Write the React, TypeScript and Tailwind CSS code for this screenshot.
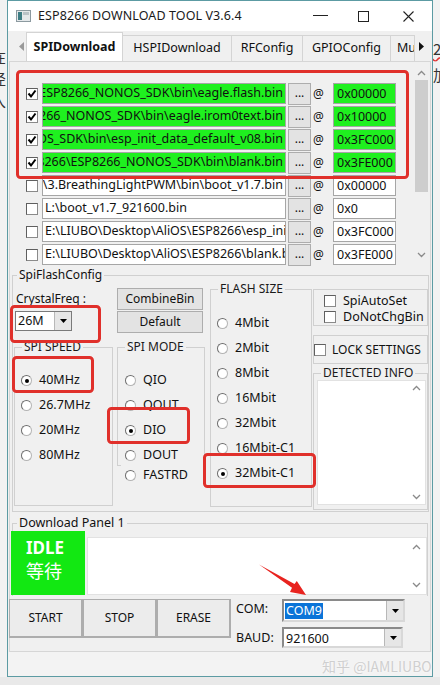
import type { ReactNode } from "react"

const rows = [
  { on: true, path: "ESP8266_NONOS_SDK\\bin\\eagle.flash.bin", addr: "0x00000", end: true },
  { on: true, path: "8266_NONOS_SDK\\bin\\eagle.irom0text.bin", addr: "0x10000", end: true },
  { on: true, path: "NOS_SDK\\bin\\esp_init_data_default_v08.bin", addr: "0x3FC000", end: true },
  { on: true, path: "P8266\\ESP8266_NONOS_SDK\\bin\\blank.bin", addr: "0x3FE000", end: true },
  { on: false, path: "M\\3.BreathingLightPWM\\bin\\boot_v1.7.bin", addr: "0x00000", end: true },
  { on: false, path: "L:\\boot_v1.7_921600.bin", addr: "0x0", end: false },
  { on: false, path: "E:\\LIUBO\\Desktop\\AliOS\\ESP8266\\esp_ini", addr: "0x3FC000", end: false },
  { on: false, path: "E:\\LIUBO\\Desktop\\AliOS\\ESP8266\\blank.b", addr: "0x3FE000", end: false },
]

function Check({ on = false }: { on?: boolean }) {
  return (
    <span className="w-[12px] h-[12px] shrink-0 border border-[#8a8a8a] border-t-[#5f5f5f] border-l-[#5f5f5f] bg-white flex items-center justify-center">
      {on && (
        <svg width="10" height="10" viewBox="0 0 10 10">
          <path d="M1.5 4.5 L4 7.5 L8.5 1.5" fill="none" stroke="#000" strokeWidth="2" />
        </svg>
      )}
    </span>
  )
}

function Radio({ label, on = false }: { label: string; on?: boolean }) {
  return (
    <div className="h-[25px] flex items-center gap-[7px] text-[12.5px]">
      <span className="w-[11px] h-[11px] shrink-0 rounded-full border border-[#b4b4b4] border-t-[#6d6d6d] border-l-[#6d6d6d] bg-white flex items-center justify-center">
        {on && <span className="w-[4px] h-[4px] rounded-full bg-black" />}
      </span>
      <span>{label}</span>
    </div>
  )
}

function Group({ label, className, children }: { label: string; className?: string; children?: ReactNode }) {
  return (
    <fieldset className={`border border-[#d0d0d0] ${className ?? ""}`}>
      <legend className="ml-[7px] px-[2px] text-[12px] leading-[14px] text-[#1a1a1a]">{label}</legend>
      {children}
    </fieldset>
  )
}

function Btn({ children, className }: { children: ReactNode; className?: string }) {
  return (
    <div className={`bg-[#e3e3e3] border border-[#adadad] flex items-center justify-center text-[12px] ${className ?? ""}`}>
      {children}
    </div>
  )
}

function DropArrow() {
  return (
    <span className="w-[17px] shrink-0 bg-[#e6e6e6] border-l border-[#b8b8b8] flex items-center justify-center">
      <svg width="7" height="4" viewBox="0 0 7 4">
        <path d="M0 0 H7 L3.5 4 Z" fill="#000" />
      </svg>
    </span>
  )
}

function Chevron({ up }: { up?: boolean }) {
  return (
    <svg width="9" height="6" viewBox="0 0 9 6">
      <path d={up ? "M1 5 L4.5 1.5 L8 5" : "M1 1 L4.5 4.5 L8 1"} fill="none" stroke="#8a8a8a" strokeWidth="1.3" />
    </svg>
  )
}

function TitleBar() {
  return (
    <div className="h-[30px] bg-white flex items-center shrink-0">
      <svg className="ml-[8px]" width="15" height="12" viewBox="0 0 15 12">
        <rect x="0.5" y="0.5" width="14" height="11" fill="#e4e8ea" stroke="#8c9aa0" />
        <rect x="2" y="2" width="4" height="8" fill="#3d7d84" />
        <rect x="7" y="2" width="6" height="3" fill="#b9c3c7" />
      </svg>
      <span className="ml-[7px] text-[12.5px] tracking-[0.1px] text-[#1a1a1a]">ESP8266 DOWNLOAD TOOL V3.6.4</span>
      <div className="ml-auto flex items-center">
        <svg width="16" height="2" viewBox="0 0 16 2" className="mr-[29px]">
          <rect width="15" height="1" fill="#222" />
        </svg>
        <svg width="11" height="11" viewBox="0 0 11 11" className="mr-[34px]">
          <rect x="0.5" y="0.5" width="10" height="10" fill="none" stroke="#222" />
        </svg>
        <svg width="11" height="11" viewBox="0 0 11 11" className="mr-[18px]">
          <path d="M0.5 0.5 L10.5 10.5 M10.5 0.5 L0.5 10.5" stroke="#222" strokeWidth="1.1" />
        </svg>
      </div>
    </div>
  )
}

function TabStrip() {
  const tabs = [
    { t: "HSPIDownload", w: "w-[109px]" },
    { t: "RFConfig", w: "w-[71px]" },
    { t: "GPIOConfig", w: "w-[88px]" },
  ]
  return (
    <div className="h-[30px] flex items-end shrink-0 bg-[#f0f0f0]">
      <span className="w-[18px] h-full flex items-center justify-end pr-[2px]">
        <svg width="5" height="9" viewBox="0 0 5 9">
          <path d="M5 0 V9 L0 4.5 Z" fill="#9a9a9a" />
        </svg>
      </span>
      <div className="w-[97px] h-[29px] bg-white border border-b-0 border-[#d4d4d4] flex items-center justify-center text-[12.5px] font-bold">
        SPIDownload
      </div>
      {tabs.map((x) => (
        <div key={x.t} className={`${x.w} h-[26px] border border-l-0 border-b-0 border-[#d4d4d4] flex items-center justify-center text-[12.5px]`}>
          {x.t}
        </div>
      ))}
      <div className="w-[24px] h-[26px] border border-l-0 border-b-0 border-[#d4d4d4] overflow-hidden text-[12.5px] flex items-center pl-[6px]">
        Mu
      </div>
      <span className="h-full flex items-center pl-[4px]">
        <svg width="5" height="9" viewBox="0 0 5 9">
          <path d="M0 0 V9 L5 4.5 Z" fill="#111" />
        </svg>
      </span>
    </div>
  )
}

function FileList() {
  return (
    <div className="h-[204px] flex shrink-0">
      <div className="w-[403px] pt-[21px] pl-[16px]">
        {rows.map((r, i) => (
          <div key={i} className="h-[23px] flex items-start">
            <div className="h-[21px] flex items-center">
              <Check on={r.on} />
            </div>
            <div
              className={`ml-[4px] w-[244px] h-[21px] border border-[#a6a6a6] overflow-hidden flex items-center whitespace-nowrap text-[12.5px] px-[2px] ${r.on ? "bg-[#1ff01f]" : "bg-white"} ${r.end ? "justify-end" : "justify-start"}`}
            >
              {r.path}
            </div>
            <Btn className="ml-[2px] w-[23px] h-[22px] text-[11px] pb-[3px]">...</Btn>
            <span className="w-[12px] ml-[2px] text-[12px] leading-[21px]">@</span>
            <div className={`ml-[8px] w-[63px] h-[21px] border border-[#a6a6a6] text-[12.5px] leading-[19px] pl-[3px] ${r.on ? "bg-[#1ff01f]" : "bg-white"}`}>
              {r.addr}
            </div>
          </div>
        ))}
      </div>
      <div className="w-[17px] flex flex-col items-center pt-[8px] pb-[8px]">
        <Chevron up />
        <div className="w-[13px] h-[112px] bg-[#cdcdcd] mt-[4px]" />
        <div className="flex-1" />
        <Chevron />
      </div>
    </div>
  )
}

function SpiFlashConfig() {
  return (
    <fieldset className="mx-[2px] mt-[2px] h-[244px] border border-[#d0d0d0] shrink-0">
      <legend className="ml-[4px] px-[2px] text-[12px] leading-[14px]">SpiFlashConfig</legend>
      <div className="flex pl-[1px] items-start">
        <div className="w-[99px] flex flex-col">
          <span className="mt-[9px] text-[12px] leading-[16px] pl-[2px]">CrystalFreq :</span>
          <div className="mt-[4px] ml-[1px] w-[57px] h-[20px] bg-white border border-[#7a7a7a] flex">
            <span className="flex-1 text-[12.5px] leading-[18px] pl-[2px]">26M</span>
            <DropArrow />
          </div>
          <Group label="SPI SPEED" className="mt-[9px] h-[166px]">
            <div className="mt-[14px] pl-[6px]">
              <Radio label="40MHz" on />
              <Radio label="26.7MHz" />
              <Radio label="20MHz" />
              <Radio label="80MHz" />
            </div>
          </Group>
        </div>
        <div className="ml-[4px] w-[88px] flex flex-col">
          <Btn className="mt-[6px] h-[22px] w-[86px] text-[12.5px]">CombineBin</Btn>
          <Btn className="mt-[1px] h-[22px] w-[86px] text-[12.5px]">Default</Btn>
          <Group label="SPI MODE" className="mt-[7px] h-[126px]">
            <div className="mt-[14px] pl-[7px]">
              <Radio label="QIO" />
              <Radio label="QOUT" />
              <Radio label="DIO" on />
              <Radio label="DOUT" />
            </div>
          </Group>
          <div className="relative -mt-[3px] ml-[4px] pl-[4px] bg-[#f0f0f0]">
            <Radio label="FASTRD" />
          </div>
        </div>
        <div className="ml-[5px] w-[102px]">
          <Group label="FLASH SIZE" className="h-[225px]">
            <div className="mt-[15px] pl-[6px]">
              <Radio label="4Mbit" />
              <Radio label="2Mbit" />
              <Radio label="8Mbit" />
              <Radio label="16Mbit" />
              <Radio label="32Mbit" />
              <Radio label="16Mbit-C1" />
              <Radio label="32Mbit-C1" on />
            </div>
          </Group>
        </div>
        <div className="ml-[1px] w-[115px] flex flex-col">
          <div className="mt-[7px] h-[37px] border border-[#d0d0d0] pl-[10px] pt-[3px] flex flex-col text-[12.5px]">
            <div className="h-[16px] flex items-center gap-[7px]">
              <Check />
              <span>SpiAutoSet</span>
            </div>
            <div className="h-[16px] flex items-center gap-[7px]">
              <Check />
              <span>DoNotChgBin</span>
            </div>
          </div>
          <div className="mt-[9px] h-[29px] border border-[#d0d0d0] flex items-center gap-[6px] text-[12px] whitespace-nowrap">
            <Check />
            <span>LOCK SETTINGS</span>
          </div>
          <Group label="DETECTED INFO" className="mt-[2px] h-[144px]">
            <div className="h-[125px] ml-[3px] mr-[1px] bg-white flex flex-col items-end pr-[4px] py-[4px] border border-[#e2e2e2]">
              <Chevron up />
              <div className="flex-1" />
              <Chevron />
            </div>
          </Group>
        </div>
      </div>
    </fieldset>
  )
}

function DownloadPanel() {
  return (
    <div className="flex flex-col shrink-0">
      <fieldset className="mx-[2px] mt-[4px] h-[80px] border border-b-0 border-[#d0d0d0]">
        <legend className="ml-[4px] px-[2px] text-[12.5px] leading-[14px]">Download Panel 1</legend>
        <div className="flex items-start">
          <div className="-ml-[2px] mt-[1px] w-[74px] h-[64px] bg-[#12e812] flex flex-col text-white pl-[15px] pt-[7px]">
            <span className="text-[17px] leading-[20px] font-bold">IDLE</span>
            <span className="text-[18px] leading-[25px] font-['Noto_Sans_CJK_SC',sans-serif]">等待</span>
          </div>
          <div className="ml-[2px] mt-[7px] flex-1 h-[58px] bg-white border border-[#e2e2e2] flex flex-col items-end pr-[5px] py-[6px]">
            <Chevron up />
            <div className="flex-1" />
            <Chevron />
          </div>
        </div>
      </fieldset>
      <div className="flex mt-[3px] -ml-[1px]">
        <Btn className="w-[74px] h-[39px] border-b-2 border-r-2 border-[#8d8d8d] bg-[#ececec] text-[12.5px]">START</Btn>
        <Btn className="w-[74px] h-[39px] border-b-2 border-r-2 border-[#8d8d8d] bg-[#ececec] text-[12.5px]">STOP</Btn>
        <Btn className="w-[74px] h-[39px] border-b-2 border-r-2 border-[#8d8d8d] bg-[#ececec] text-[12.5px]">ERASE</Btn>
        <div className="ml-[5px] flex flex-col text-[12.5px]">
          <div className="h-[24px] flex items-start">
            <span className="w-[46px] pt-[1px]">COM:</span>
            <div className="w-[123px] h-[23px] bg-white border-2 border-[#8a8a8a] border-r-[#d8d8d8] border-b-[#d8d8d8] flex">
              <span className="flex-1 flex items-center pl-[1px]">
                <span className="bg-[#0a74d8] text-white leading-[16px] px-[1px]">COM9</span>
              </span>
              <DropArrow />
            </div>
          </div>
          <div className="mt-[4px] h-[21px] flex items-start">
            <span className="w-[46px] pt-[2px]">BAUD:</span>
            <div className="w-[121px] h-[21px] bg-white border-2 border-[#8a8a8a] border-r-[#d8d8d8] border-b-[#d8d8d8] flex">
              <span className="flex-1 leading-[18px] pl-[2px] pt-[1px]">921600</span>
              <DropArrow />
            </div>
          </div>
        </div>
      </div>
    </div>
  )
}

function Annotations() {
  const boxes = [
    [17.5, 71.5, 390, 106],
    [11.5, 306.5, 88, 35],
    [13.5, 357.5, 79, 34],
    [108.5, 408.5, 80, 34],
    [204.5, 454.5, 110, 32],
  ]
  return (
    <svg className="absolute left-0 top-0 pointer-events-none" width="440" height="685" viewBox="0 0 440 685">
      {boxes.map(([x, y, w, h], i) => (
        <rect key={i} x={x} y={y} width={w} height={h} rx="3" fill="none" stroke="#e0302b" strokeWidth="3" />
      ))}
      <polygon points="259,564.5 292,587.8 290,592 306,595 296.8,581 294.5,584" fill="#e8231f" />
    </svg>
  )
}

export default function App() {
  return (
    <div className="relative w-[440px] h-[685px] overflow-hidden bg-[#e9e9e9] font-['Noto_Sans',sans-serif] text-[#111] flex items-start">
      <div className="w-[7px] h-[677px] overflow-hidden shrink-0 bg-[#f2f2f2] font-['Noto_Sans_CJK_SC',sans-serif] text-[15px] text-[#333]">
        <div className="-ml-[9px] pt-[46px] leading-[22px] flex flex-col">
          <span>在</span>
          <span>径</span>
          <span>入</span>
        </div>
      </div>
      <div className="w-[426px] h-[677px] border border-[#5c9ba3] bg-[#f0f0f0] flex flex-col shrink-0">
        <TitleBar />
        <TabStrip />
        <div className="mx-[1px] h-[591px] border border-[#d6d6d6] bg-[#f0f0f0] flex flex-col shrink-0">
          <FileList />
          <SpiFlashConfig />
          <DownloadPanel />
        </div>
        <div className="flex-1 bg-[#f3f3f3]" />
      </div>
      <div className="w-[7px] h-[677px] overflow-hidden shrink-0 bg-[#f2f2f2] font-['Noto_Sans_CJK_SC',sans-serif] text-[15px] text-[#333]">
        <div className="pt-[36px] leading-[26px] flex flex-col">
          <span className="underline decoration-wavy decoration-[#e03030]">2</span>
          <span>加</span>
        </div>
      </div>
      <Annotations />
      <span className="absolute left-[322px] top-[656px] text-[14px] text-[#cfcfcf] font-['Noto_Sans_CJK_SC',sans-serif] [text-shadow:0_0_2px_#fff]">
        知乎 @IAMLIUBO
      </span>
    </div>
  )
}
